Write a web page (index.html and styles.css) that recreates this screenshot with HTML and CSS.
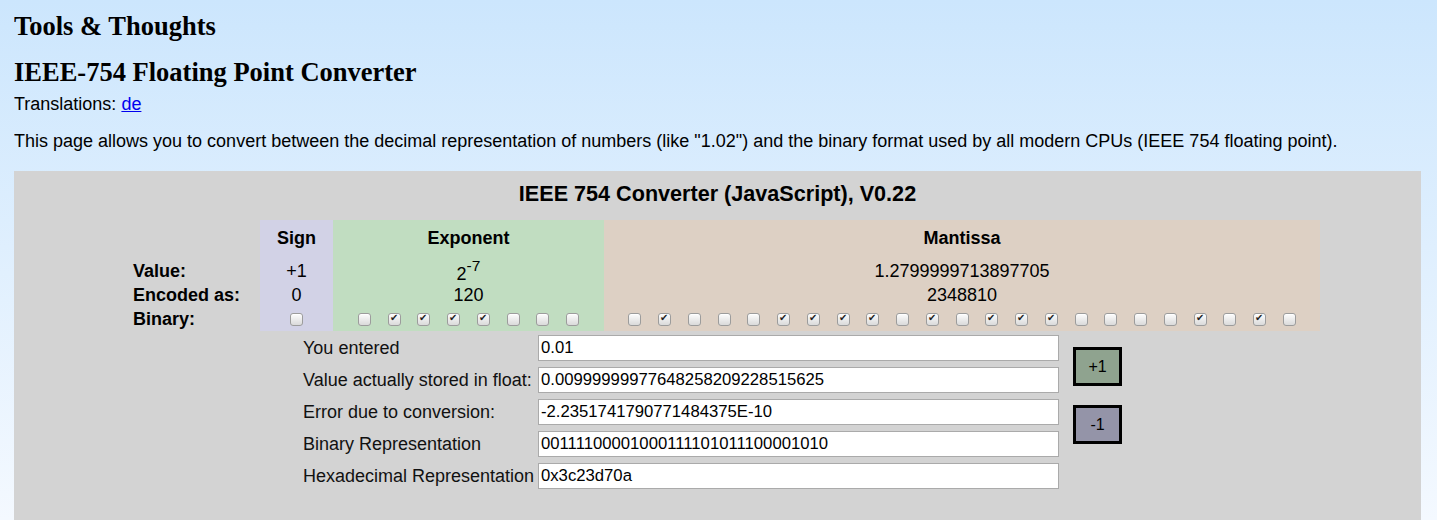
FILE: index.html
```html
<!DOCTYPE html>
<html lang="en">
<head>
  <meta charset="UTF-8" />
  <title>IEEE-754 Floating Point Converter</title>
  <link rel="stylesheet" href="styles.css">
</head>
<body>
  <h1 class="site-title">Tools &amp; Thoughts</h1>
  <h2 class="page-title">IEEE-754 Floating Point Converter</h2>
  <p class="translations">Translations: <a href="#">de</a></p>
  <p class="intro">This page allows you to convert between the decimal representation of numbers (like "1.02") and the binary format used by all modern CPUs (IEEE 754 floating point).</p>

  <div class="converter">
    <h3 class="conv-title">IEEE 754 Converter (JavaScript), V0.22</h3>

    <table class="bits">
      <tr class="head-row">
        <td class="label-col"></td>
        <th class="sign">Sign</th>
        <th class="exponent">Exponent</th>
        <th class="mantissa">Mantissa</th>
      </tr>
      <tr class="value-row">
        <td class="label-col">Value:</td>
        <td class="sign">+1</td>
        <td class="exponent"><span class="exp-val">2<sup>-7</sup></span></td>
        <td class="mantissa">1.2799999713897705</td>
      </tr>
      <tr class="enc-row">
        <td class="label-col">Encoded as:</td>
        <td class="sign">0</td>
        <td class="exponent">120</td>
        <td class="mantissa">2348810</td>
      </tr>
      <tr class="bin-row">
        <td class="label-col">Binary:</td>
        <td class="sign"><div class="boxes" id="sign-bits"></div></td>
        <td class="exponent"><div class="boxes" id="exp-bits"></div></td>
        <td class="mantissa"><div class="boxes" id="man-bits"></div></td>
      </tr>
    </table>

    <div class="results">
      <div class="fields">
        <label>You entered</label>
        <input type="text" value="0.01">
        <label>Value actually stored in float:</label>
        <input type="text" value="0.00999999977648258209228515625">
        <label>Error due to conversion:</label>
        <input type="text" value="-2.2351741790771484375E-10">
        <label>Binary Representation</label>
        <input type="text" value="00111100001000111101011100001010">
        <label>Hexadecimal Representation</label>
        <input type="text" value="0x3c23d70a">
      </div>
      <div class="buttons">
        <button class="btn-plus">+1</button>
        <button class="btn-minus">-1</button>
      </div>
    </div>
  </div>

  <script>
    // bit pattern of 0.01f
    var bits = "00111100001000111101011100001010";

    function makeBoxes(id, from, to) {
      var box = document.getElementById(id);
      for (var i = from; i < to; i++) {
        var cb = document.createElement("input");
        cb.type = "checkbox";
        cb.checked = bits[i] === "1";
        box.appendChild(cb);
      }
    }

    makeBoxes("sign-bits", 0, 1);
    makeBoxes("exp-bits", 1, 9);
    makeBoxes("man-bits", 9, 32);
  </script>
</body>
</html>
```

FILE: styles.css
```css
html {
  min-height: 100%;
  background: linear-gradient(#cce6fd, #f4f9ff 520px);
}
body {
  margin: 0 16px 0 14px;
  color: #000;
  font-family: "Liberation Sans", Arial, sans-serif;
  font-size: 18px;
}
.site-title {
  font-family: "Liberation Serif", "Times New Roman", serif;
  font-size: 26.5px;
  margin: 11px 0 0;
  line-height: 31px;
}
.page-title {
  font-family: "Liberation Serif", "Times New Roman", serif;
  font-size: 26.5px;
  margin: 15px 0 0;
  line-height: 31px;
}
.translations {
  margin: 6px 0 0;
  line-height: 21px;
}
.translations a {
  color: #0000ee;
}
.intro {
  margin: 16px 0 0;
  line-height: 21px;
}
.converter {
  margin-top: 19px;
  background-color: #d3d3d3;
  padding: 10px 0 40px;
}
.conv-title {
  text-align: center;
  font-size: 21.6px;
  line-height: 26px;
  margin: 0 0 13px;
}
.bits {
  border-collapse: collapse;
  border-spacing: 0;
  margin-left: 119px;
  text-align: center;
}
.bits td, .bits th {
  padding: 0;
}
.bits .label-col {
  width: 127px;
  text-align: left;
  font-weight: bold;
}
.bits .sign {
  width: 73px;
  background-color: #d2d2e6;
}
.bits .exponent {
  width: 271px;
  background-color: #c1ddc1;
}
.bits .mantissa {
  width: 716px;
  background-color: #ddd0c4;
}
.head-row th, .head-row td {
  height: 36px;
}
.value-row td {
  height: 27px;
  vertical-align: bottom;
  line-height: 24px;
}
.exp-val {
  position: relative;
  top: 3px;
}
.value-row sup {
  font-size: 15.5px;
  vertical-align: 9px;
  line-height: 0;
}
.enc-row td {
  height: 24px;
}
.bin-row td {
  height: 24px;
}
.boxes {
  display: flex;
  justify-content: center;
  align-items: center;
  height: 24px;
}
.boxes input {
  appearance: none;
  -webkit-appearance: none;
  width: 13px;
  height: 13px;
  margin: 0 8.375px;
  border: 1px solid #9c9c9c;
  border-radius: 3px;
  background: linear-gradient(#fdfdfd, #dadada);
  box-shadow: inset 0 1px 0 #fff;
  position: relative;
}
.boxes input:checked::after {
  content: "\2714";
  position: absolute;
  left: 1px;
  top: -2px;
  font-size: 10px;
  color: #222;
}
.results {
  display: flex;
  margin-left: 289px;
  margin-top: 4px;
}
.fields {
  display: grid;
  grid-template-columns: 235px 521px;
  row-gap: 6px;
  align-items: center;
}
.fields label {
  color: #111;
}
.fields input {
  box-sizing: border-box;
  height: 26px;
  width: 521px;
  border: 1px solid #aaa;
  padding: 0 2px;
  font-family: "Liberation Sans", Arial, sans-serif;
  font-size: 16.7px;
  color: #000;
  background: #fff;
}
.buttons {
  display: flex;
  flex-direction: column;
  gap: 19px;
  margin-left: 14px;
  padding-top: 12px;
}
.buttons button {
  box-sizing: border-box;
  width: 49px;
  height: 39px;
  border: 3px solid #000;
  font-family: "Liberation Sans", Arial, sans-serif;
  font-size: 16px;
  color: #000;
  padding: 0;
}
.btn-plus {
  background-color: #8fa38f;
}
.btn-minus {
  background-color: #9494a8;
}
```
